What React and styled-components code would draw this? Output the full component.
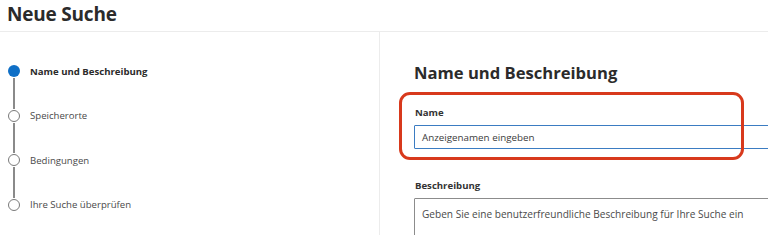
import React from 'react'
import styled, { createGlobalStyle } from 'styled-components'

const GlobalStyle = createGlobalStyle`
  html, body {
    margin: 0;
    padding: 0;
    background: #ffffff;
    overflow: hidden;
  }
  body {
    font-family: "Open Sans", "Noto Sans", "Liberation Sans", sans-serif;
    color: #323130;
  }
`

const Page = styled.div`
  width: 768px;
  height: 235px;
  display: flex;
  flex-direction: column;
  overflow: hidden;
`

const Header = styled.header`
  height: 32px;
  flex: none;
  border-bottom: 1px solid #ececec;
  padding-left: 7px;
  display: flex;
  align-items: center;
  box-sizing: border-box;
`

const Title = styled.h1`
  margin: 0 0 3px 0;
  font-size: 19px;
  font-weight: 700;
  color: #2b2b2b;
  letter-spacing: -0.2px;
`

const Body = styled.div`
  flex: 1;
  display: flex;
  min-height: 0;
`

const Sidebar = styled.nav`
  width: 380px;
  flex: none;
  border-right: 1px solid #ececec;
  box-sizing: border-box;
  padding: 33px 0 0 8px;
`

const StepList = styled.ol`
  list-style: none;
  margin: 0;
  padding: 0;
  display: flex;
  flex-direction: column;
`

const Step = styled.li`
  display: flex;
  align-items: center;
  height: 12px;
  gap: 10px;
`

const Dot = styled.span`
  width: 12px;
  height: 12px;
  box-sizing: border-box;
  border-radius: 50%;
  flex: none;
  background: ${p => (p.$active ? '#0f6fc6' : '#ffffff')};
  border: ${p => (p.$active ? 'none' : '1.5px solid #7a7a7a')};
`

const StepLabel = styled.span`
  font-size: 9.6px;
  font-weight: ${p => (p.$active ? 700 : 400)};
  color: ${p => (p.$active ? '#2b2b2b' : '#4a4a4a')};
  white-space: nowrap;
`

const Connector = styled.span`
  display: block;
  width: 1.5px;
  height: 30.5px;
  margin: 1px 0 1px 5.3px;
  background: #8a8a8a;
`

const Content = styled.main`
  flex: 1;
  padding: 29px 0 0 34px;
  overflow: hidden;
`

const SectionTitle = styled.h2`
  margin: 0;
  font-size: 16.6px;
  font-weight: 700;
  color: #2b2b2b;
  line-height: 24px;
`

const Field = styled.div`
  position: relative;
  width: 380px;
  margin-top: ${p => p.$gap}px;
`

const Label = styled.label`
  display: block;
  font-size: 9.6px;
  font-weight: 700;
  color: #333333;
  line-height: 14px;
  margin-bottom: 5px;
  padding-left: 1px;
`

const TextInput = styled.div`
  height: 24px;
  box-sizing: border-box;
  border: 1px solid #3b7cc2;
  border-radius: 1px;
  padding-left: 7px;
  display: flex;
  align-items: center;
  font-size: 9.8px;
  color: #3a3a3a;
`

const TextArea = styled.div`
  height: 60px;
  box-sizing: border-box;
  border: 1px solid #8c8c8c;
  border-radius: 1px;
  padding: 8px 0 0 7px;
  font-size: 10.1px;
  color: #4a4a4a;
`

const Highlight = styled.span`
  position: absolute;
  left: -15px;
  top: -14px;
  width: 345px;
  height: 68px;
  box-sizing: border-box;
  border: 3px solid #d8391c;
  border-radius: 11px;
  pointer-events: none;
`

const steps = [
  { label: 'Name und Beschreibung', active: true },
  { label: 'Speicherorte' },
  { label: 'Bedingungen' },
  { label: 'Ihre Suche überprüfen' },
]

export default function App() {
  return (
    <Page>
      <GlobalStyle />
      <Header>
        <Title>Neue Suche</Title>
      </Header>
      <Body>
        <Sidebar>
          <StepList>
            {steps.map((s, i) => (
              <React.Fragment key={s.label}>
                {i > 0 && <Connector />}
                <Step>
                  <Dot $active={s.active} />
                  <StepLabel $active={s.active}>{s.label}</StepLabel>
                </Step>
              </React.Fragment>
            ))}
          </StepList>
        </Sidebar>
        <Content>
          <SectionTitle>Name und Beschreibung</SectionTitle>
          <Field $gap={21}>
            <Label>Name</Label>
            <TextInput>Anzeigenamen eingeben</TextInput>
            <Highlight />
          </Field>
          <Field $gap={30}>
            <Label>Beschreibung</Label>
            <TextArea>Geben Sie eine benutzerfreundliche Beschreibung für Ihre Suche ein</TextArea>
          </Field>
        </Content>
      </Body>
    </Page>
  )
}
